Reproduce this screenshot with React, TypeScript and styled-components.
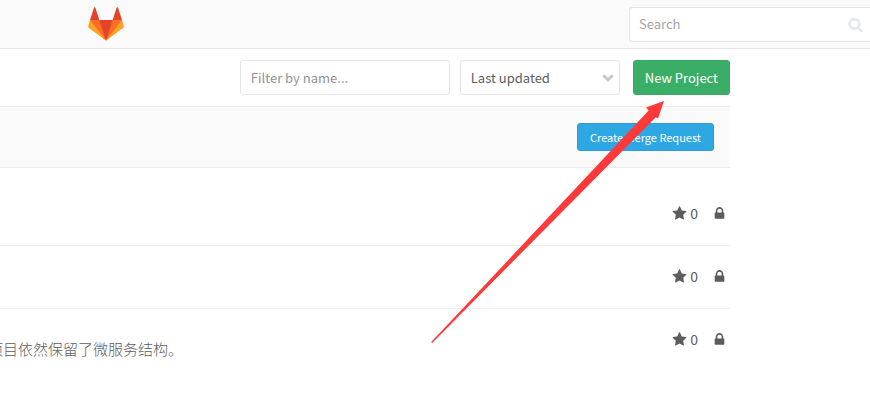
import React from "react";
import styled, { createGlobalStyle, css } from "styled-components";

const GlobalStyle = createGlobalStyle`
  *, *::before, *::after { box-sizing: border-box; }
  body {
    margin: 0;
    background: #fff;
    color: #5c5c5c;
    font-family: "Noto Sans CJK SC", "Open Sans", sans-serif;
    font-size: 13px;
    line-height: 20px;
  }
  input, select, button { font: inherit; }
`;

const Page = styled.div`
  position: relative;
  overflow: hidden;
`;

const Header = styled.header`
  display: flex;
  align-items: center;
  justify-content: space-between;
  height: 49px;
  padding-left: 88px;
  background: #fafafa;
  border-bottom: 1px solid #e3e3e3;
`;

const HomeLink = styled.a`
  display: flex;
`;

const field = css`
  height: 35px;
  padding: 0 10px;
  background: #fff;
  border: 1px solid #e5e5e5;
  border-radius: 3px;
  outline: 0;
`;

const SearchForm = styled.form`
  ${field}
  display: flex;
  align-items: center;
  width: 241px;
  padding: 0 7px 0 9px;
  border-right: 0;
  border-radius: 3px 0 0 3px;
`;

const SearchInput = styled.input`
  flex: 1;
  min-width: 0;
  padding: 0;
  border: 0;
  outline: 0;
  background: transparent;
  &::placeholder { color: #a3a3a3; opacity: 1; }
`;

const IconButton = styled.button`
  display: flex;
  padding: 0;
  border: 0;
  background: none;
  color: #e7e9ed;
  & path {
    stroke: currentColor;
    stroke-width: 90px;
  }
`;

const Main = styled.main`
  margin-right: 140px;
`;

const Toolbar = styled.div`
  display: flex;
  justify-content: flex-end;
  align-items: center;
  gap: 10px;
  height: 58px;
  border-bottom: 1px solid #ececec;
`;

const FilterInput = styled.input`
  ${field}
  width: 210px;
  &::placeholder { color: #929292; opacity: 1; }
`;

const SortBox = styled.div`
  display: grid;
  align-items: center;
  width: 160px;
  margin-right: 3px;
  & > * { grid-area: 1 / 1; }
  & > svg {
    justify-self: end;
    margin-right: 6px;
    pointer-events: none;
  }
`;

const SortSelect = styled.select`
  ${field}
  width: 100%;
  appearance: none;
  color: #5c5c5c;
`;

const Button = styled.button<{ $tone: "green" | "blue" }>`
  height: ${(p) => (p.$tone === "green" ? 35 : 28)}px;
  padding: 0 ${(p) => (p.$tone === "green" ? 11 : 12)}px;
  border: 1px solid ${(p) => (p.$tone === "green" ? "#37a762" : "#2a9bd8")};
  border-radius: 3px;
  background: ${(p) => (p.$tone === "green" ? "#3aae66" : "#2ea7e5")};
  color: #fff;
  font-size: ${(p) => (p.$tone === "green" ? 13 : 11)}px;
  line-height: 18px;
  white-space: nowrap;
`;

const Banner = styled.section`
  display: flex;
  justify-content: flex-end;
  padding: 16px;
  background: #fafafa;
  border-bottom: 1px solid #ececec;
`;

const ProjectList = styled.ul`
  margin: 0;
  padding: 15px 0 0;
  list-style: none;
`;

const ProjectRow = styled.li`
  display: flex;
  align-items: center;
  justify-content: space-between;
  height: 63px;
  padding-bottom: 2px;
  border-bottom: 1px solid #efefef;
  &:last-child { border-color: transparent; }
`;

const Description = styled.p`
  margin: 20px 0 0 -12px;
  font-size: 15px;
  font-weight: 300;
  white-space: nowrap;
`;

const Controls = styled.div`
  display: flex;
  align-items: center;
  gap: 14px;
  margin-left: auto;
  padding-right: 3px;
  font-size: 14px;
`;

const Stars = styled.span`
  display: flex;
  align-items: center;
  gap: 3px;
`;

const Arrow = styled.svg`
  position: absolute;
  top: 100px;
  left: 430px;
  pointer-events: none;
`;

const paths = {
  star: "M1728 647q0 22-26 48l-363 354 86 500q1 7 1 20 0 21-10.500 35.500t-30.500 14.500q-19 0-40-12l-449-236-449 236q-22 12-40 12-21 0-31.500-14.500t-10.500-35.500q0-6 2-20l86-500-364-354q-25-27-25-48 0-37 56-46l502-73 225-455q19-41 49-41t49 41l225 455 502 73q56 9 56 46z",
  lock: "M640 768h512v-192q0-106-75-181t-181-75-181 75-75 181v192zm832 96v576q0 40-28 68t-68 28h-960q-40 0-68-28t-28-68v-576q0-40 28-68t68-28h32v-192q0-184 132-316t316-132 316 132 132 316v192h32q40 0 68 28t28 68z",
  search: "M1216 832q0-185-131.500-316.500t-316.500-131.500-316.500 131.500-131.500 316.500 131.500 316.500 316.500 131.500 316.500-131.500 131.500-316.500zm512 832q0 52-38 90t-90 38q-54 0-90-38l-343-342q-179 124-399 124-143 0-273.500-55.500t-225-150-150-225-55.500-273.500 55.500-273.500 150-225 225-150 273.500-55.500 273.500 55.500 225 150 150 225 55.500 273.500q0 220-124 399l343 343q37 37 37 90z",
};

function Icon({ name, label, size = 15 }: { name: keyof typeof paths; label?: string; size?: number }) {
  return (
    <svg width={size} height={size} viewBox="0 0 1792 1792" fill="currentColor" role="img" aria-label={label}>
      <path d={paths[name]} />
    </svg>
  );
}

function Logo() {
  return (
    <svg width="36" height="36" viewBox="0 0 36 36" aria-hidden="true">
      <path fill="#e24329" d="M2 14l9.38 9v-9l-4-12.28c-.205-.632-1.176-.632-1.38 0z" />
      <path fill="#e24329" d="M34 14l-9.38 9v-9l4-12.28c.205-.632 1.176-.632 1.38 0z" />
      <path fill="#e24329" d="M18 34.38L3 14h30z" />
      <path fill="#fc6d26" d="M18 34.38L11.38 14H2l4 11z" />
      <path fill="#fc6d26" d="M18 34.38L24.62 14H34l-4 11z" />
      <path fill="#fca326" d="M2 14L.1 20.16c-.18.565 0 1.2.5 1.56l17.42 12.66z" />
      <path fill="#fca326" d="M34 14l1.900 6.160c.18.565 0 1.2-.5 1.560L18 34.380z" />
    </svg>
  );
}

const projects = [
  { id: 1, stars: 0, description: "" },
  { id: 2, stars: 0, description: "" },
  { id: 3, stars: 0, description: "项目依然保留了微服务结构。" },
];

export default function App() {
  return (
    <Page>
      <GlobalStyle />
      <Header>
        <HomeLink href="#" aria-label="GitLab">
          <Logo />
        </HomeLink>
        <SearchForm role="search">
          <SearchInput placeholder="Search" aria-label="Search" />
          <IconButton type="button" aria-label="Submit search">
            <Icon name="search" />
          </IconButton>
        </SearchForm>
      </Header>
      <Main>
        <Toolbar>
          <FilterInput placeholder="Filter by name..." aria-label="Filter by name" />
          <SortBox>
            <SortSelect aria-label="Sort projects">
              <option>Last updated</option>
            </SortSelect>
            <svg width="12" height="8" viewBox="0 0 12 8" aria-hidden="true">
              <path d="M1.300 1.300L6 6l4.700-4.700" fill="none" stroke="#c7c7c7" strokeWidth="2.800" />
            </svg>
          </SortBox>
          <Button $tone="green">New Project</Button>
        </Toolbar>
        <Banner>
          <Button $tone="blue">Create Merge Request</Button>
        </Banner>
        <ProjectList>
          {projects.map((project) => (
            <ProjectRow key={project.id}>
              {project.description && <Description>{project.description}</Description>}
              <Controls>
                <Stars>
                  <Icon name="star" label="Stars" />
                  {project.stars}
                </Stars>
                <Icon name="lock" label="Private" />
              </Controls>
            </ProjectRow>
          ))}
        </ProjectList>
      </Main>
      <Arrow width="236" height="244" viewBox="0 0 236 244" aria-hidden="true">
        <path fill="#fd3a39" d="M1.200 242L218.700 10.500 216 7.500 234 1 228 18.600 225.800 17.300 2.200 243z" />
      </Arrow>
    </Page>
  );
}
